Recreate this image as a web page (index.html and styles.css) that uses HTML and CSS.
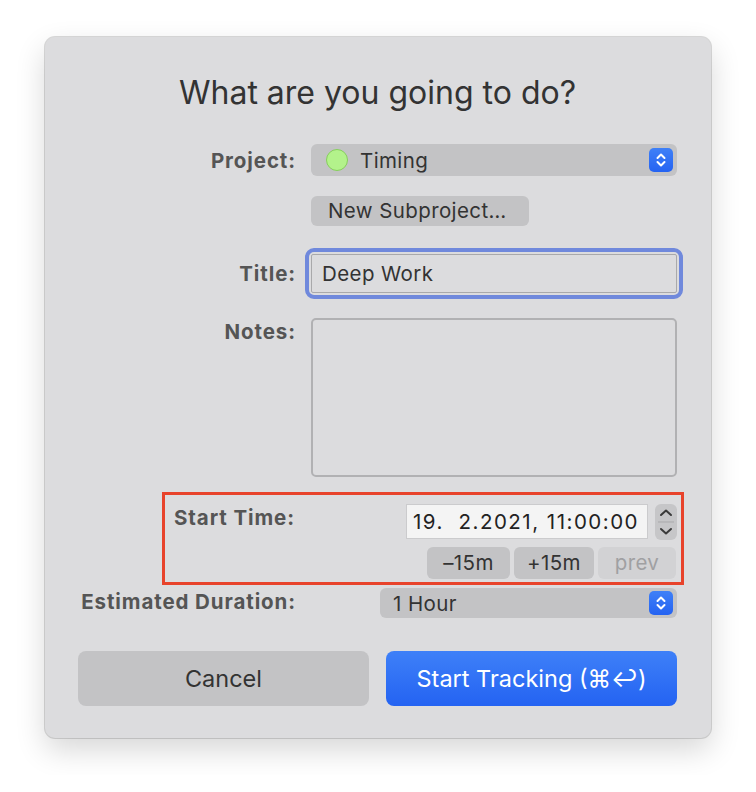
FILE: index.html
```html
<!DOCTYPE html>
<html lang="en">
<head>
  <meta charset="UTF-8">
  <meta name="viewport" content="width=device-width, initial-scale=1">
  <title>What are you going to do?</title>
  <link rel="stylesheet" href="styles.css">
</head>
<body>
  <div class="window">
    <h1>What are you going to do?</h1>

    <div class="row row-project">
      <span class="label">Project:</span>
      <div class="popup">
        <span class="dot"></span>
        <span class="popup-text">Timing</span>
        <span class="popup-arrows">
          <svg width="14" height="18" viewBox="0 0 14 18"><path d="M3.5 7 L7 3.5 L10.5 7 M3.5 11 L7 14.5 L10.5 11" fill="none" stroke="#fff" stroke-width="2" stroke-linecap="round" stroke-linejoin="round"/></svg>
        </span>
      </div>
    </div>

    <div class="row row-sub">
      <span class="label"></span>
      <div><button class="btn-small btn-sub">New Subproject…</button></div>
    </div>

    <div class="row row-title">
      <span class="label">Title:</span>
      <div class="focus-ring"><div class="textfield">Deep Work</div></div>
    </div>

    <div class="row row-notes">
      <span class="label">Notes:</span>
      <div class="notes"></div>
    </div>

    <div class="start-box">
      <span class="start-label">Start Time:</span>
      <div class="date-wrap">
        <div class="datefield">19.&nbsp;&nbsp;2.2021, 11:00:00</div>
        <div class="stepper">
          <svg width="22" height="36" viewBox="0 0 22 36"><path d="M6 11 L11 6.5 L16 11" fill="none" stroke="#3a3a3a" stroke-width="2" stroke-linecap="round" stroke-linejoin="round"/><line x1="3" y1="18" x2="19" y2="18" stroke="#a9a9ab" stroke-width="1"/><path d="M6 25 L11 29.5 L16 25" fill="none" stroke="#3a3a3a" stroke-width="2" stroke-linecap="round" stroke-linejoin="round"/></svg>
        </div>
      </div>
      <div class="quick">
        <button class="btn-small">–15m</button>
        <button class="btn-small">+15m</button>
        <button class="btn-small disabled">prev</button>
      </div>
    </div>

    <div class="row row-duration">
      <span class="label">Estimated Duration:</span>
      <div class="popup popup-duration">
        <span class="popup-text">1 Hour</span>
        <span class="popup-arrows">
          <svg width="14" height="18" viewBox="0 0 14 18"><path d="M3.5 7 L7 3.5 L10.5 7 M3.5 11 L7 14.5 L10.5 11" fill="none" stroke="#fff" stroke-width="2" stroke-linecap="round" stroke-linejoin="round"/></svg>
        </span>
      </div>
    </div>

    <div class="actions">
      <button class="btn-big">Cancel</button>
      <button class="btn-big primary">Start Tracking (⌘↩)</button>
    </div>
  </div>
</body>
</html>
```

FILE: styles.css
```css
:root { --bg: #dcdcde; --ctl: #c3c3c5; --label: #555; --text: #333; --blue: #2f6ff5; }
* { box-sizing: border-box; }
body { margin: 0; background: #fff; font-family: "Inter", "Liberation Sans", sans-serif;
  color: var(--text); padding: 37px 45px; }
.window { width: 666px; height: 701px; background: var(--bg); border-radius: 10px;
  box-shadow: 0 0 0 1px rgba(0,0,0,0.14), 0 12px 30px rgba(0,0,0,0.16);
  padding: 38px 34px 0 33px; }
h1 { margin: 0; font-weight: 400; font-size: 32px; line-height: 36px; text-align: center;
  color: #333; }
.row { display: grid; grid-template-columns: 217px 1fr; column-gap: 16px; align-items: center; }
.label { text-align: right; font-weight: 700; font-size: 20.5px; letter-spacing: 0.9px;
  color: var(--label); margin-right: -1px; }
.row-project { margin-top: 33px; }
.row-sub { margin-top: 20px; }
.row-title { margin-top: 22px; }
.row-notes { margin-top: 19px; align-items: start; }
.row-notes .label { padding-top: 1px; }

.popup { height: 32px; background: var(--ctl); border-radius: 6px; display: flex;
  align-items: center; padding: 0 4px 0 15px; font-size: 20.5px; letter-spacing: 0.4px; }
.dot { width: 22px; height: 22px; border-radius: 50%; background: #b3f28b;
  border: 1px solid #86cf5c; margin-right: 12px; }
.popup-text { flex: 1; }
.popup-arrows { width: 24px; height: 24px; background: var(--blue); border-radius: 5px;
  display: flex; align-items: center; justify-content: center;
  background-image: linear-gradient(#3f80f7, #2563f2); }
.popup-arrows svg { display: block; }

.btn-small { font: inherit; font-size: 20.5px; letter-spacing: 0.4px; color: var(--text);
  background: var(--ctl); border: none; border-radius: 6px; height: 30px; padding: 0 16px;
  line-height: 30px; }
.btn-sub { width: 218px; padding: 0 0 0 17px; text-align: left; }
.btn-small.disabled { background: #d2d2d4; color: #a0a0a2; }

.focus-ring { margin-left: -6px; margin-right: -6px; padding: 2px; border: 4px solid #7089dc;
  border-radius: 9px; }
.textfield { height: 39px; border: 1px solid #a9a9ab; background: var(--bg);
  font-size: 20.5px; letter-spacing: 0.4px; line-height: 37px; padding-left: 10px;
  border-radius: 2px; }
.notes { height: 159px; border: 2px solid #b1b1b3; border-radius: 5px; }

.start-box { margin: 15px -7px 0 84px; border: 3px solid #e8432b; padding: 9px 4px 3px 9px;
  display: grid; grid-template-columns: 1fr auto; row-gap: 7px; }
.start-label { font-weight: 700; font-size: 20.5px; letter-spacing: 0.9px; color: var(--label);
  padding-top: 1px; }
.date-wrap { display: flex; gap: 7px; }
.datefield { width: 242px; height: 35px; background: #f4f4f4; border: 1px solid #cbcbcd;
  font-size: 20.5px; line-height: 33px; padding-left: 6px; letter-spacing: 1.5px; color: #222;
  white-space: nowrap; overflow: hidden; }
.stepper { width: 22px; height: 36px; background: #c6c6c8; border-radius: 6px; }
.stepper svg { display: block; }
.quick { grid-column: 2; display: flex; justify-content: flex-end; gap: 4px; padding-right: 1px; }
.quick .btn-small { height: 32px; width: 83px; padding: 0; }
.quick .btn-small:nth-child(2) { width: 80px; }
.quick .btn-small:nth-child(3) { width: 78px; }

.row-duration { margin-top: 3px; }
.row-duration .label { margin-top: -3px; }
.popup-duration { width: 297px; margin-left: auto; height: 30px; padding-left: 13px; }

.actions { display: flex; gap: 17px; margin-top: 33px; }
.btn-big { flex: 1; height: 55px; border: none; border-radius: 8px; font: inherit;
  font-size: 23.5px; background: var(--ctl); color: var(--text); }
.btn-big.primary { color: #fff; background-image: linear-gradient(#3e80f8, #2463f2); }
```
